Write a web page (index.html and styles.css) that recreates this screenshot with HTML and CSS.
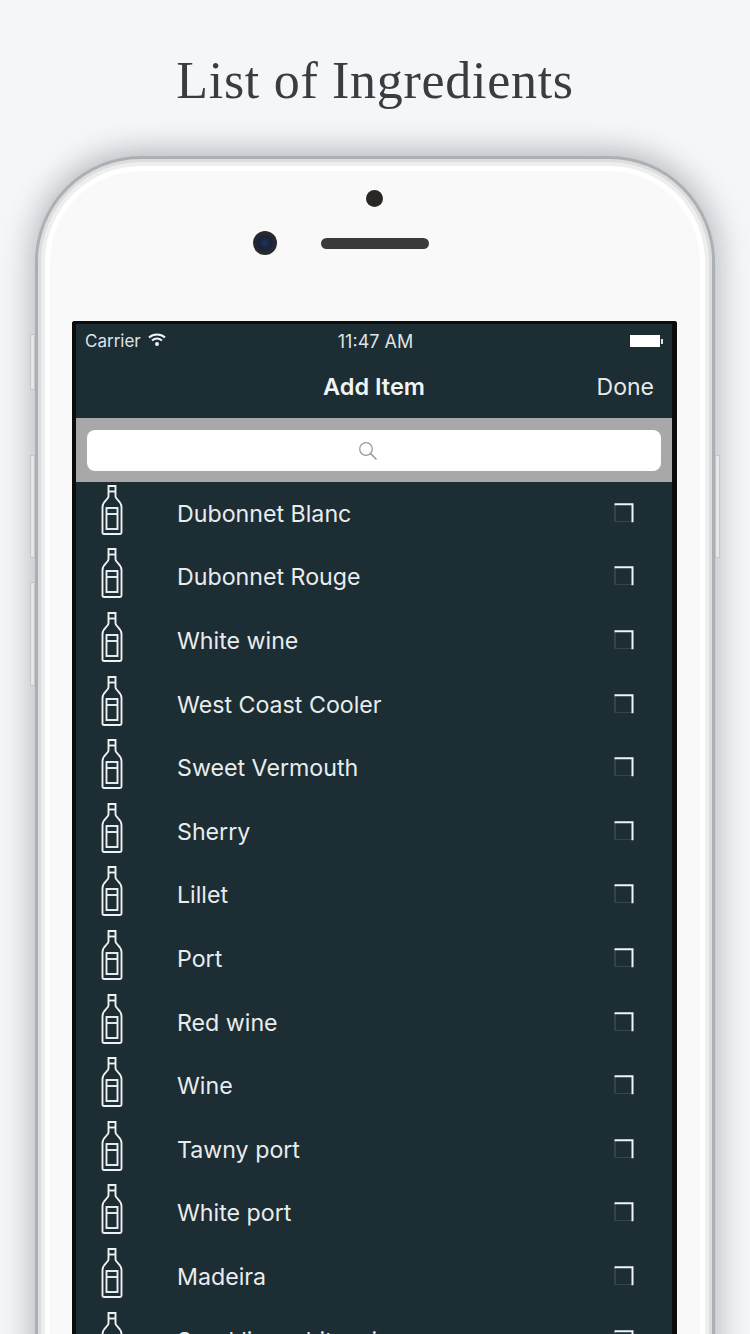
FILE: index.html
```html
<!DOCTYPE html>
<html lang="en">

<head>
    <meta charset="UTF-8">
    <meta name="viewport" content="width=device-width, initial-scale=1.0">
    <title>List of Ingredients</title>

    <link rel="stylesheet" href="styles.css">
</head>

<body>

    <svg class="sprite" width="0" height="0">
        <symbol id="bottle" viewBox="0 0 22 50">
            <path d="M7.500 1h7v10.500c0 3 6 4.500 6 10.500v25.500c0 1-.5 1.500-1.500 1.500h-16c-1 0-1.500-.5-1.500-1.500v-25.500c0-6 6-7.500 6-10.500z" fill="none" stroke="currentColor" stroke-width="1.900" />
            <path d="M7.500 6.500h7" fill="none" stroke="currentColor" stroke-width="1.900" />
            <rect x="5.500" y="23" width="11" height="21" fill="none" stroke="currentColor" stroke-width="1.900" />
            <path d="M5.500 29h11" fill="none" stroke="currentColor" stroke-width="1.900" />
        </symbol>
        <symbol id="check" viewBox="0 0 20 20">
            <path d="M1 18.500V1.500" fill="none" stroke="#4c5b61" stroke-width="1" />
            <path d="M1 18.500h17" fill="none" stroke="#35454c" stroke-width="1" />
            <path d="M.5 1.200h18v18" fill="none" stroke="#f2f4f4" stroke-width="2" />
        </symbol>
    </svg>

    <div class="stage">
        <h1 class="page-title">List of Ingredients</h1>

        <div class="phone">
            <span class="side-btn side-mute"></span>
            <span class="side-btn side-vol-up"></span>
            <span class="side-btn side-vol-down"></span>
            <span class="side-btn side-power"></span>

            <div class="phone-top">
                <span class="sensor"></span>
                <div class="camera-row">
                    <span class="camera"></span>
                    <span class="speaker"></span>
                </div>
            </div>

            <div class="screen">
                <div class="status-bar">
                    <div class="status-left">
                        <span>Carrier</span>
                        <svg class="wifi" width="18" height="14" viewBox="0 0 18 14">
                            <path d="M1 4.500C5.500.5 12.500.5 17 4.500" fill="none" stroke="#f2f4f4" stroke-width="2" />
                            <path d="M4 7.500c3-2.500 7-2.500 10 0" fill="none" stroke="#f2f4f4" stroke-width="2" />
                            <circle cx="9" cy="11" r="2" fill="#f2f4f4" />
                        </svg>
                    </div>
                    <span class="status-time">11:47 AM</span>
                    <div class="status-right">
                        <span class="battery"></span>
                        <span class="battery-tip"></span>
                    </div>
                </div>

                <div class="nav-bar">
                    <span></span>
                    <span class="nav-title">Add Item</span>
                    <span class="nav-done">Done</span>
                </div>

                <div class="search-band">
                    <div class="search-input">
                        <svg width="20" height="20" viewBox="0 0 20 20">
                            <circle cx="8" cy="8" r="6.300" fill="none" stroke="#9b9b9b" stroke-width="1.300" />
                            <path d="M12.600 12.600l5.900 5.900" fill="none" stroke="#9b9b9b" stroke-width="1.500" />
                        </svg>
                    </div>
                </div>

                <ul class="item-list">
                    <li class="item"><svg class="bottle"><use href="#bottle" /></svg><span class="item-name">Dubonnet Blanc</span><svg class="check"><use href="#check" /></svg></li>
                    <li class="item"><svg class="bottle"><use href="#bottle" /></svg><span class="item-name">Dubonnet Rouge</span><svg class="check"><use href="#check" /></svg></li>
                    <li class="item"><svg class="bottle"><use href="#bottle" /></svg><span class="item-name">White wine</span><svg class="check"><use href="#check" /></svg></li>
                    <li class="item"><svg class="bottle"><use href="#bottle" /></svg><span class="item-name">West Coast Cooler</span><svg class="check"><use href="#check" /></svg></li>
                    <li class="item"><svg class="bottle"><use href="#bottle" /></svg><span class="item-name">Sweet Vermouth</span><svg class="check"><use href="#check" /></svg></li>
                    <li class="item"><svg class="bottle"><use href="#bottle" /></svg><span class="item-name">Sherry</span><svg class="check"><use href="#check" /></svg></li>
                    <li class="item"><svg class="bottle"><use href="#bottle" /></svg><span class="item-name">Lillet</span><svg class="check"><use href="#check" /></svg></li>
                    <li class="item"><svg class="bottle"><use href="#bottle" /></svg><span class="item-name">Port</span><svg class="check"><use href="#check" /></svg></li>
                    <li class="item"><svg class="bottle"><use href="#bottle" /></svg><span class="item-name">Red wine</span><svg class="check"><use href="#check" /></svg></li>
                    <li class="item"><svg class="bottle"><use href="#bottle" /></svg><span class="item-name">Wine</span><svg class="check"><use href="#check" /></svg></li>
                    <li class="item"><svg class="bottle"><use href="#bottle" /></svg><span class="item-name">Tawny port</span><svg class="check"><use href="#check" /></svg></li>
                    <li class="item"><svg class="bottle"><use href="#bottle" /></svg><span class="item-name">White port</span><svg class="check"><use href="#check" /></svg></li>
                    <li class="item"><svg class="bottle"><use href="#bottle" /></svg><span class="item-name">Madeira</span><svg class="check"><use href="#check" /></svg></li>
                    <li class="item"><svg class="bottle"><use href="#bottle" /></svg><span class="item-name">Sparkling white wine</span><svg class="check"><use href="#check" /></svg></li>
                </ul>
            </div>
        </div>
    </div>

</body>

</html>
```

FILE: styles.css
```css
html,
body {
    height: 1334px;
    margin: 0;
    overflow: hidden;
}

body {
    background-color: #f5f6f8;
    font-family: Inter, "Liberation Sans", sans-serif;
}

.sprite {
    display: block;
    height: 0;
}

.stage {
    height: 1334px;
    overflow: hidden;
}

.page-title {
    margin: 0;
    height: 156px;
    padding-top: 51px;
    box-sizing: border-box;
    text-align: center;
    font-family: "Liberation Serif", serif;
    font-size: 52px;
    letter-spacing: 0.7px;
    line-height: 60px;
    font-weight: normal;
    color: #393d42;
}

/* phone body */
.phone {
    position: relative;
    width: 680px;
    height: 1230px;
    margin-left: 35px;
    box-sizing: border-box;
    padding: 0 35px 0 34px;
    background: #f9f9f9;
    border: 3px solid #adb0b2;
    border-bottom: none;
    border-radius: 106px 106px 0 0;
    box-shadow: inset 0 0 0 3px #dcddde, inset 0 0 0 7px #eeeeef, inset 0 0 0 12px #ffffff, -6px -3px 30px rgba(80, 85, 95, 0.24), 6px -3px 30px rgba(80, 85, 95, 0.24);
}

.side-btn {
    position: absolute;
    width: 5px;
    background: #e6e7e8;
    border: 1px solid #c4c6c8;
    box-sizing: border-box;
}

.side-mute {
    left: -8px;
    top: 175px;
    height: 56px;
}

.side-vol-up {
    left: -8px;
    top: 296px;
    height: 103px;
}

.side-vol-down {
    left: -8px;
    top: 423px;
    height: 104px;
}

.side-power {
    right: -8px;
    top: 296px;
    height: 103px;
}

.phone-top {
    height: 162px;
    box-sizing: border-box;
    padding-top: 31px;
    display: flex;
    flex-direction: column;
    align-items: center;
}

.sensor {
    width: 17px;
    height: 17px;
    border-radius: 50%;
    background: #2a2626;
}

.camera-row {
    margin-top: 24px;
    width: 100%;
    display: grid;
    grid-template-columns: 1fr auto 1fr;
    align-items: center;
}

.camera {
    justify-self: end;
    width: 24px;
    height: 24px;
    margin-right: 44px;
    border-radius: 50%;
    background: radial-gradient(circle, #1c3463 0, #1a2438 35%, #2b2b2e 70%);
}

.speaker {
    grid-column: 2;
    width: 108px;
    height: 11px;
    border-radius: 6px;
    background: #3b3b3d;
}

/* screen */
.screen {
    height: 1060px;
    background: #1c2d34;
    border: solid #0c0c0c;
    border-width: 3px 5px 0 4px;
    border-radius: 3px 3px 0 0;
    color: #f2f4f4;
    overflow: hidden;
}

.status-bar {
    height: 34px;
    padding: 0 9px;
    display: grid;
    grid-template-columns: 1fr auto 1fr;
    align-items: center;
    font-size: 17px;
    box-sizing: border-box;
    color: #dfe3e4;
}

.status-left {
    display: flex;
    align-items: center;
    gap: 7px;
}

.wifi {
    margin-top: -3px;
}

.status-time {
    font-size: 18px;
    margin-left: 3px;
}

.status-right {
    display: flex;
    justify-content: flex-end;
    align-items: center;
    gap: 1px;
}

.battery {
    width: 30px;
    height: 12px;
    background: #fff;
}

.battery-tip {
    width: 2px;
    height: 5px;
    background: #dfe3e4;
}

.nav-bar {
    height: 60px;
    padding-bottom: 2px;
    box-sizing: border-box;
    display: grid;
    grid-template-columns: 1fr auto 1fr;
    align-items: center;
}

.nav-title {
    margin-bottom: 2px;
    font-size: 23.5px;
    font-weight: 600;
}

.nav-done {
    justify-self: end;
    margin-right: 18px;
    font-size: 23px;
    color: #e6e9ea;
}

.search-band {
    height: 64px;
    padding: 12px 11px 11px;
    box-sizing: border-box;
    background: #a8a8a8;
}

.search-input {
    height: 41px;
    background: #fff;
    border-radius: 8px;
    display: flex;
    align-items: center;
    justify-content: center;
    padding-right: 13px;
}

.item-list {
    list-style: none;
    margin: 0;
    padding: 0;
}

.item {
    height: 63.6px;
    display: flex;
    align-items: center;
    padding: 0 38px 0 25px;
}

.bottle {
    width: 22px;
    height: 50px;
    margin-bottom: 8px;
    flex-shrink: 0;
    color: #eef1f1;
}

.item-name {
    flex: 1;
    margin-left: 54px;
    font-size: 23.2px;
    color: #e9eced;
}

.check {
    width: 20px;
    height: 20px;
    flex-shrink: 0;
    margin-top: -2px;
}
```
